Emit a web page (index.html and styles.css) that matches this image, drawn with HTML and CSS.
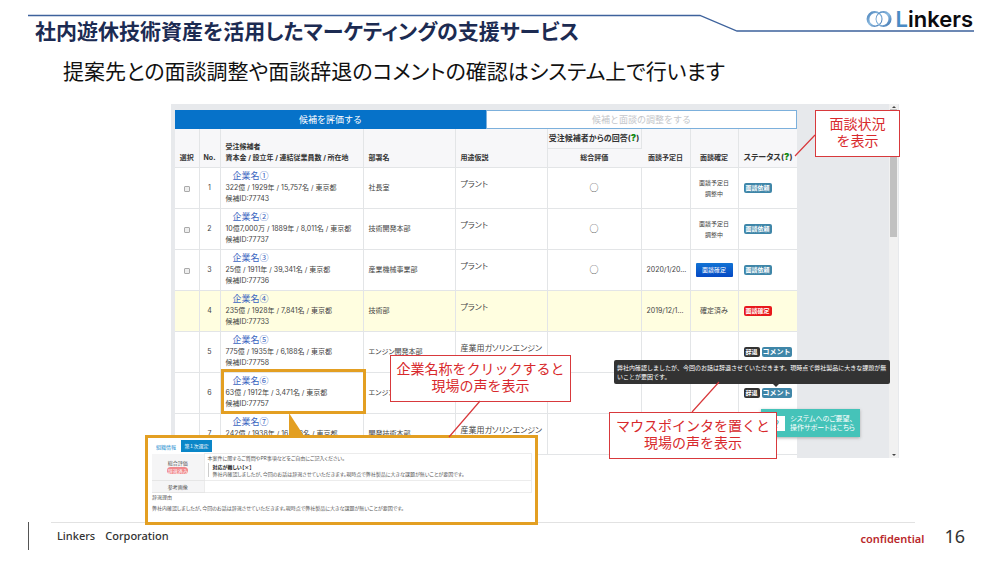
FILE: index.html
```html
<!DOCTYPE html>
<html lang="ja">
<head>
<meta charset="utf-8">
<title>社内遊休技術資産を活用したマーケティングの支援サービス</title>
<link rel="stylesheet" href="styles.css">
</head>
<body>
<main class="slide">
  <header class="head">
    <svg class="head-rule" viewBox="0 0 1000 40" aria-hidden="true"><polyline points="28,15.500 700,15.500 737,31 974,31" fill="none" stroke="#3d629c" stroke-width="1.300"/></svg>
    <h1 class="title">社内遊休技術資産を活用したマーケティングの支援サービス</h1>
    <div class="logo">
      <svg class="logo-rings" viewBox="0 0 26 18" aria-hidden="true">
        <defs>
          <linearGradient id="ring" x1="0" y1="0" x2="1" y2="1"><stop offset="0" stop-color="#3f78b4"/><stop offset=".5" stop-color="#8dbbe0"/><stop offset="1" stop-color="#2f66a6"/></linearGradient>
        </defs>
        <path fill="url(#ring)" fill-rule="evenodd" d="M8.500 1a8 8 0 1 0 .1 16a8 8 0 1 0 -.1 -16zM9.500 3a6 6.200 0 1 1 -.1 12.400a6 6.200 0 1 1 .1 -12.400z"/>
        <path fill="url(#ring)" fill-rule="evenodd" d="M17.500 1a8 8 0 1 0 .1 16a8 8 0 1 0 -.1 -16zM16.500 2.800a6 6.200 0 1 1 -.1 12.400a6 6.200 0 1 1 .1 -12.400z"/>
      </svg>
      <span class="logo-text"><span class="logo-l">L</span>inkers</span>
    </div>
  </header>
  <p class="lead">提案先との面談調整や面談辞退のコメントの確認はシステム上で行います</p>

  <section class="stage">
    <div class="app">
      <div class="app-main">
        <div class="tabs">
          <button class="tab tab-on" type="button">候補を評価する</button>
          <button class="tab" type="button">候補と面談の調整をする</button>
        </div>
        <table class="list">
          <colgroup><col class="c-sel"><col class="c-no"><col class="c-co"><col class="c-dept"><col class="c-use"><col class="c-eval"><col class="c-date"><col class="c-fix"><col class="c-stat"></colgroup>
          <thead>
            <tr><th class="ctr" rowspan="2">選択</th><th class="ctr" rowspan="2">No.</th><th rowspan="2">受注候補者<br>資本金 / 設立年 / 連結従業員数 / 所在地</th><th rowspan="2">部署名</th><th rowspan="2">用途仮説</th><th class="ctr group">受注候補者からの回答(<b class="help">?</b>)</th><th class="ctr" rowspan="2">面談予定日</th><th class="ctr" rowspan="2">面談確定</th><th class="stat" rowspan="2">ステータス(<b class="help">?</b>)</th></tr>
            <tr><th class="ctr">総合評価</th></tr>
          </thead>
          <tbody>
            <tr><td class="ctr"><input type="checkbox" aria-label="企業名①を選択"></td><td class="ctr">1</td><td class="co"><a href="#">企業名①</a><br>322億 / 1929年 / 15,757名 / 東京都<br>候補ID:77743</td><td>社長室</td><td class="use">プラント</td><td class="ctr mark">○</td><td></td><td class="ctr wait">面談予定日<br>調整中</td><td><span class="tag">面談依頼</span></td></tr>
            <tr><td class="ctr"><input type="checkbox" aria-label="企業名②を選択"></td><td class="ctr">2</td><td class="co"><a href="#">企業名②</a><br>10億7,000万 / 1889年 / 8,011名 / 東京都<br>候補ID:77737</td><td>技術開発本部</td><td class="use">プラント</td><td class="ctr mark">○</td><td></td><td class="ctr wait">面談予定日<br>調整中</td><td><span class="tag">面談依頼</span></td></tr>
            <tr><td class="ctr"><input type="checkbox" aria-label="企業名③を選択"></td><td class="ctr">3</td><td class="co"><a href="#">企業名③</a><br>25億 / 1911年 / 39,341名 / 東京都<br>候補ID:77736</td><td>産業機械事業部</td><td class="use">プラント</td><td class="ctr mark">○</td><td>2020/1/20...</td><td class="ctr"><button class="fix" type="button">面談確定</button></td><td><span class="tag">面談依頼</span></td></tr>
            <tr class="hit"><td></td><td class="ctr">4</td><td class="co"><a href="#">企業名④</a><br>235億 / 1928年 / 7,841名 / 東京都<br>候補ID:77733</td><td>技術部</td><td class="use">プラント</td><td></td><td>2019/12/1...</td><td class="ctr done">確定済み</td><td><span class="tag tag-red">面談確定</span></td></tr>
            <tr><td></td><td class="ctr">5</td><td class="co"><a href="#">企業名⑤</a><br>775億 / 1935年 / 6,188名 / 東京都<br>候補ID:77758</td><td class="kana">エンジン開発本部</td><td class="use">産業用ガソリンエンジン</td><td></td><td></td><td></td><td><span class="tag tag-dark">辞退</span><span class="tag tag-note">コメント</span></td></tr>
            <tr><td></td><td class="ctr">6</td><td class="co"><a href="#">企業名⑥</a><br>63億 / 1912年 / 3,471名 / 東京都<br>候補ID:77757</td><td class="kana">エンジン</td><td class="use"></td><td></td><td></td><td></td><td><span class="tag tag-dark">辞退</span><span class="tag tag-note">コメント</span></td></tr>
            <tr><td></td><td class="ctr">7</td><td class="co"><a href="#">企業名⑦</a><br>242億 / 1938年 / 16,308名 / 東京都<br>&nbsp;</td><td>開発技術本部</td><td class="use">産業用ガソリンエンジン</td><td></td><td></td><td></td><td></td></tr>
          </tbody>
        </table>
      </div>
      <div class="scroll"><i class="arrow-up"></i><i class="thumb"></i><i class="arrow-down"></i></div>
    </div>

    <a class="support" href="#"><span class="support-icon">?</span><span>システムへのご要望、<br>操作サポートはこちら</span></a>
    <div class="tip">弊社内確認しましたが、今回のお話は辞退させていただきます。現時点で弊社製品に大きな課題が無いことが要因です。</div>
    <div class="focus"></div>

    <div class="detail">
      <div class="d-tabs"><a href="#">組織情報</a><button type="button">第１次選定</button></div>
      <table class="d-table">
        <tr><th>総合評価<span class="pill">辞退済み</span></th><td>本案件に関するご質問やPR事項などをご自由にご記入ください。<blockquote><b>対応が難しい【×】</b><br>弊社内確認しましたが、今回のお話は辞退させていただきます。現時点で弊社製品に大きな課題が無いことが要因です。</blockquote></td></tr>
        <tr><th>参考画像</th><td></td></tr>
      </table>
      <p>辞退理由</p>
      <p>弊社内確認しましたが、今回のお話は辞退させていただきます。現時点で弊社製品に大きな課題が無いことが要因です。</p>
    </div>

    <div class="note note-status">面談状況<br>を表示</div>
    <div class="note note-click">企業名称をクリックすると<br>現場の声を表示</div>
    <div class="note note-hover">マウスポインタを置くと<br>現場の声を表示</div>
    <svg class="leaders" viewBox="0 0 728 420" aria-hidden="true">
      <g stroke="#d8393c" stroke-width="1.200"><path d="M644 31L624 52M309 297L278 333M548 278L521 308"/></g>
      <path d="M118 309V332H133z" fill="#e39f22"/>
      <path d="M602 280h6l-3 3z" fill="#333"/>
    </svg>
  </section>

  <footer class="foot"><span class="corp"><span>Linkers</span><span>Corporation</span></span><span class="conf">confidential</span><span class="page">16</span></footer>
</main>
</body>
</html>
```
FILE: styles.css
```css
* { box-sizing: border-box; }
body { margin: 0; background: #fff; font-family: "Noto Sans CJK JP", sans-serif; }
button { margin: 0; padding: 0; border: 0; font: inherit; }
a { text-decoration: none; color: inherit; }
.slide { min-height: 100vh; display: flex; flex-direction: column; overflow: hidden; }

.head { position: relative; display: flex; justify-content: space-between; align-items: flex-start; padding: 8px 27px 0 35px; }
.head-rule { position: absolute; left: 0; top: 0; width: 100%; }
.title { position: relative; margin: 7px 0 0; font-size: 21px; line-height: 30px; font-weight: 700; color: #1c2b52; font-feature-settings: "palt"; white-space: nowrap; }
.logo { position: relative; display: flex; align-items: center; gap: 3px; height: 22px; }
.logo-rings { width: 26px; height: 18px; }
.logo-text { font: 600 22px/22px Inter, sans-serif; color: #0b0b0f; }
.logo-l { color: #4a8bc4; }
.lead { margin: 10px 0 19px 63px; font-size: 21px; line-height: 30px; color: #111; font-feature-settings: "palt"; white-space: nowrap; }

.stage { position: relative; width: 728px; margin-left: 171px; }
.app { display: flex; height: 354px; background: #e7e9ec; padding: 6px 1px 0 4px; }
.app-main { flex: 0 0 622px; display: flex; flex-direction: column; background: #fff; }
.tabs { display: flex; }
.tab { flex: 1; height: 19px; border: 1px solid #7cb0dc; background: #fff; color: #c4c6ca; font-size: 9px; line-height: 17px; }
.tab-on { background: #0672c9; border-color: #0672c9; color: #fff; }

.list { width: 100%; table-layout: fixed; border-collapse: collapse; font: 7px/11px Inter, "Noto Sans CJK JP", sans-serif; color: #444; }
.c-sel { width: 24px; } .c-no { width: 21px; } .c-co { width: 143px; } .c-dept, .c-use { width: 92px; }
.c-eval { width: 94px; } .c-date { width: 49px; } .c-fix { width: 48px; } .c-stat { width: 59px; }
.list th, .list td { padding: 0 0 0 5px; border-right: 1px solid #e3e5e7; border-bottom: 1px solid #e3e5e7; text-align: left; white-space: nowrap; }
.list th:last-child, .list td:last-child { border-right: 0; }
.list th { height: 19px; padding-bottom: 4px; vertical-align: bottom; background: #f7f7f9; color: #333; font-weight: 700; }
.list thead tr + tr th { border-right: 1px solid #e3e5e7; }
.list td { height: 41px; }
.list .ctr { text-align: center; padding-left: 0; }
.list .stat, .list .group { font-size: 8px; font-feature-settings: "palt"; }
.list .help { color: #138a13; font-size: 9px; }
.co a { margin-left: 7px; font: 9px/10px "Noto Sans CJK JP", sans-serif; color: #3964c0; }
.list .use { font-size: 8px; font-feature-settings: "palt"; padding-bottom: 6px; }
.kana { font-feature-settings: "palt"; }
.list .mark { font: 9px/11px "Noto Sans CJK JP", sans-serif; }
.list .wait { font-size: 6px; }
.hit { background: #fffee0; }
.list input { appearance: none; width: 6px; height: 6px; margin: 2px 0 0; border: 1px solid #aaa; border-radius: 1px; background: #eee; vertical-align: middle; }
.tag { display: inline-block; margin-right: 2px; padding: 0 2px; border-radius: 2px; background: #3f86a8; color: #fff; font-size: 6px; line-height: 10px; font-weight: 700; vertical-align: middle; }
.tag-red { background: #e8191c; }
.tag-dark { background: #333; }
.tag-note { font-size: 7px; margin-right: 0; padding: 0 1px; }
.fix { width: 37px; height: 14px; border-radius: 1px; background: linear-gradient(#1273d4, #0549c4); color: #fff; font-size: 6px; line-height: 14px; }

.scroll { margin-left: auto; width: 9px; display: flex; flex-direction: column; align-items: center; background: #f1f1f1; margin-top: -6px; }
.thumb { width: 7px; height: 128px; margin-top: 1px; background: #c1c1c1; }
.arrow-up, .arrow-down { border: 2px solid transparent; }
.arrow-up { border-bottom-color: #444; }
.arrow-down { margin: auto 0 0; border-top-color: #444; }

.support { position: absolute; left: 590px; top: 305px; width: 99px; height: 28px; display: flex; align-items: center; gap: 5px; padding-left: 7px; background: #45c3b9; color: #fff; font-size: 7px; line-height: 9px; font-feature-settings: "palt"; white-space: nowrap; box-shadow: 0 1px 3px #aaa; }
.support-icon { width: 17px; height: 15px; background: #fff; color: #45a9a0; font-size: 10px; line-height: 15px; text-align: center; flex: none; }
.tip { position: absolute; left: 443px; top: 256px; width: 276px; padding: 3px; border-radius: 2px; background: #333; color: #fff; font-size: 6px; line-height: 9px; }
.focus { position: absolute; left: 50px; top: 265px; width: 145px; height: 45px; border: 3px solid #e39f22; }

.detail { position: absolute; left: -26px; top: 331px; width: 393px; height: 90px; padding: 2px 3px 0 4px; border: 3px solid #e39f22; background: #fff; font-size: 5px; line-height: 7px; color: #555; font-feature-settings: "palt"; }
.d-tabs { display: flex; align-items: center; gap: 5px; padding-left: 4px; color: #1d8ed0; }
.d-tabs button { width: 31px; height: 12px; background: #0a86c8; color: #fff; line-height: 12px; }
.d-table { width: 100%; border-collapse: collapse; margin-top: 1px; }
.d-table th { width: 52px; padding: 2px 0; background: #f5f5f6; border-bottom: 1px solid #e6e6e6; font-weight: 400; text-align: center; }
.d-table td { padding: 0 3px 3px; border: 1px solid #ececec; vertical-align: top; white-space: nowrap; }
.pill { display: block; width: 21px; margin: 1px auto 0; border-radius: 4px; background: #f0888c; color: #fff; line-height: 7px; }
.detail blockquote { margin: 2px 0 0; padding-left: 4px; border-left: 1px solid #ccc; }
.detail b { color: #222; }
.detail p { margin: 0 0 4px; white-space: nowrap; }

.note { position: absolute; border: 1px solid #d8393c; background: #fff; color: #d8292c; font-size: 14px; line-height: 17px; text-align: center; padding: 4px 0 7px; white-space: nowrap; }
.note-status { left: 644px; top: 6px; width: 85px; }
.note-click { left: 219px; top: 251px; width: 181px; }
.note-hover { left: 438px; top: 308px; width: 168px; }
.leaders { position: absolute; left: 0; top: 0; width: 728px; height: 420px; pointer-events: none; }

.foot { display: flex; align-items: center; gap: 20px; margin: 64px 35px 0 28px; height: 28px; padding-left: 28px; border-left: 1px solid #555; font: 11px/16px "Noto Sans", sans-serif; color: #333; background: linear-gradient(#e2e2e2, #e2e2e2) 22px 0 / calc(100% - 72px) 1px no-repeat; }
.corp { display: flex; gap: 10px; font-weight: 500; }
.conf { margin-left: auto; color: #b9282b; font-weight: 600; padding-top: 5px; }
.page { font-size: 18px; line-height: 24px; }
```
